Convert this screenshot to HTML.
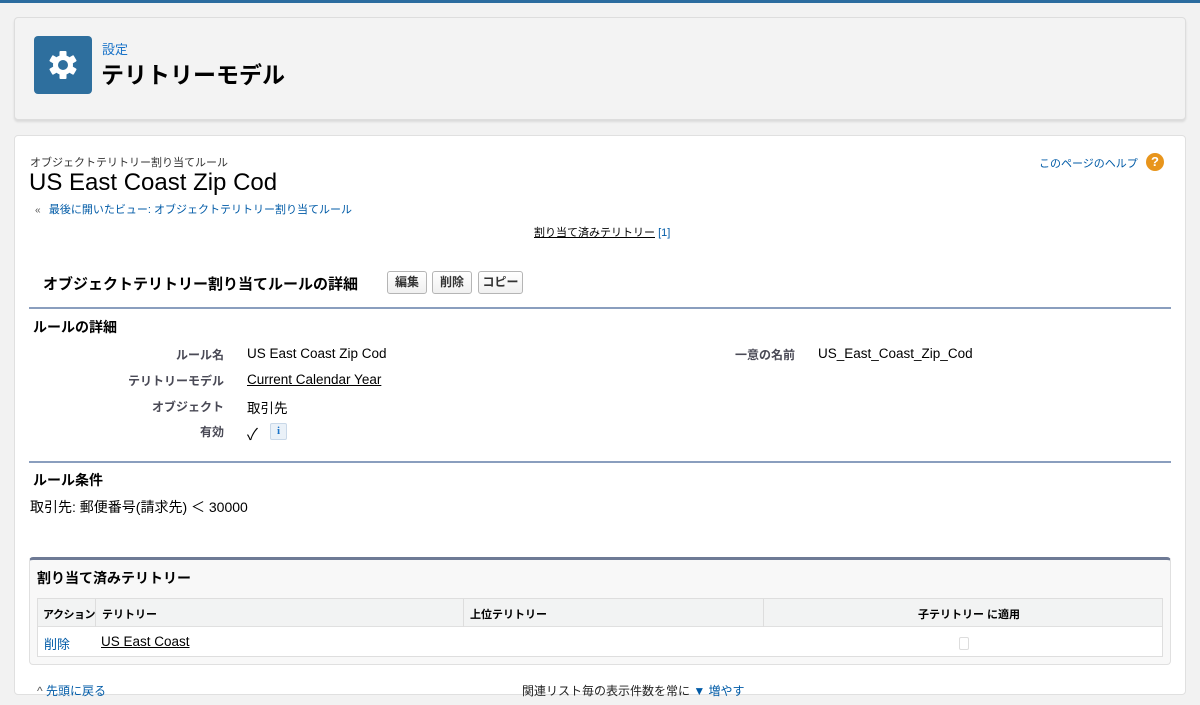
<!DOCTYPE html>
<html><head><meta charset="utf-8"><style>
*{margin:0;padding:0;box-sizing:border-box}
body{width:1200px;height:705px;background:#f2f2f2;font-family:"Liberation Sans","Noto Sans CJK JP",sans-serif;color:#000;position:relative;overflow:hidden}
.a{position:absolute}
a,.lk{color:#015ba7;text-decoration:none}
.u{text-decoration:underline;color:#000}
.btn{position:absolute;top:271px;height:23px;border:1px solid #b5b5b5;border-radius:3px;background:linear-gradient(#fff,#f0f0f0);font-size:12px;font-weight:bold;text-align:center;line-height:21px;color:#333}
.lbl{position:absolute;width:130px;text-align:right;font-size:12px;font-weight:bold;color:#4a4a56;left:94px}
.val{position:absolute;left:247px;font-size:13.5px}
</style></head><body>
<div class="a" style="left:0;top:0;width:1200px;height:3px;background:#2b6c9f"></div>
<div class="a" style="left:14px;top:17px;width:1172px;height:103px;background:#f3f3f3;border:1px solid #ddd;border-radius:4px;box-shadow:0 2px 2px rgba(0,0,0,.1)"></div>
<div class="a" style="left:34px;top:36px;width:58px;height:58px;background:#2e6f9e;border-radius:4px"></div>
<svg class="a" style="left:46px;top:48px" width="34" height="34" viewBox="0 0 34 34"><g fill="#fff" transform="translate(17 17)"><circle r="10"/><g id="t"><rect x="-3.5" y="-14" width="7" height="6" rx="1"/></g><use href="#t" transform="rotate(60)"/><use href="#t" transform="rotate(120)"/><use href="#t" transform="rotate(180)"/><use href="#t" transform="rotate(240)"/><use href="#t" transform="rotate(300)"/></g><circle cx="17" cy="17" r="5" fill="#2e6f9e"/></svg>
<div class="a lk" style="left:102px;top:39px;font-size:13px;color:#1a73c8">設定</div>
<div class="a" style="left:101px;top:56px;font-size:23px;font-weight:bold">テリトリーモデル</div>

<div class="a" style="left:14px;top:135px;width:1172px;height:560px;background:#fff;border:1px solid #e0e0e0;border-radius:4px"></div>
<div class="a" style="left:30px;top:154px;font-size:11px;color:#333">オブジェクトテリトリー割り当てルール</div>
<div class="a" style="left:29px;top:169px;font-size:24px">US East Coast Zip Cod</div>
<div class="a" style="left:35px;top:201px;font-size:10px;color:#555">«&nbsp;&nbsp;&nbsp;<span class="lk" style="font-size:11px">最後に開いたビュー: オブジェクトテリトリー割り当てルール</span></div>
<div class="a lk" style="left:1039px;top:155px;font-size:11px">このページのヘルプ</div>
<div class="a" style="left:1146px;top:153px;width:18px;height:18px;border-radius:50%;background:#e8951c;color:#fff;font-size:13px;font-weight:bold;text-align:center;line-height:18px">?</div>
<div class="a" style="left:534px;top:224px;font-size:11px"><span class="u">割り当て済みテリトリー</span> <span class="lk">[1]</span></div>

<div class="a" style="left:43px;top:273px;font-size:15px;font-weight:bold">オブジェクトテリトリー割り当てルールの詳細</div>
<div class="btn" style="left:387px;width:40px">編集</div>
<div class="btn" style="left:432px;width:40px">削除</div>
<div class="btn" style="left:478px;width:45px">コピー</div>
<div class="a" style="left:29px;top:307px;width:1142px;height:2px;background:#8a9ebe"></div>
<div class="a" style="left:33px;top:317px;font-size:14px;font-weight:bold">ルールの詳細</div>
<div class="lbl" style="top:346px">ルール名</div><div class="val" style="top:346px">US East Coast Zip Cod</div>
<div class="lbl" style="left:665px;top:346px">一意の名前</div><div class="val" style="left:818px;top:346px">US_East_Coast_Zip_Cod</div>
<div class="lbl" style="top:372px">テリトリーモデル</div><div class="val u" style="top:372px">Current Calendar Year</div>
<div class="lbl" style="top:398px">オブジェクト</div><div class="val" style="top:397px">取引先</div>
<div class="lbl" style="top:423px">有効</div><div class="val" style="top:421px;font-size:16px">✓</div>
<div class="a" style="left:270px;top:423px;width:17px;height:17px;border:1px solid #c9d8e8;background:#eaf1f8;border-radius:2px;color:#1a73c8;font:bold 11px 'Liberation Serif',serif;text-align:center;line-height:15px">i</div>
<div class="a" style="left:29px;top:461px;width:1142px;height:2px;background:#8a9ebe"></div>
<div class="a" style="left:33px;top:470px;font-size:14px;font-weight:bold">ルール条件</div>
<div class="a" style="left:30px;top:497px;font-size:14px">取引先: 郵便番号(請求先) ＜ 30000</div>

<div class="a" style="left:29px;top:557px;width:1142px;height:108px;background:#f8f8f8;border:1px solid #e0e0e0;border-top:3px solid #6e7a95;border-radius:4px"></div>
<div class="a" style="left:37px;top:568px;font-size:14px;font-weight:bold">割り当て済みテリトリー</div>
<div class="a" style="left:37px;top:598px;width:1126px;height:59px;border:1px solid #dedede;background:#fff"></div>
<div class="a" style="left:38px;top:599px;width:1124px;height:28px;background:#f2f3f3;border-bottom:1px solid #e0e0e0"></div>
<div class="a" style="left:95px;top:599px;width:1px;height:28px;background:#ddd"></div>
<div class="a" style="left:463px;top:599px;width:1px;height:28px;background:#ddd"></div>
<div class="a" style="left:763px;top:599px;width:1px;height:28px;background:#ddd"></div>
<div class="a" style="left:43px;top:606px;font-size:11px;font-weight:bold;letter-spacing:-0.5px">アクション</div>
<div class="a" style="left:102px;top:606px;font-size:11px;font-weight:bold">テリトリー</div>
<div class="a" style="left:470px;top:606px;font-size:11px;font-weight:bold">上位テリトリー</div>
<div class="a" style="left:918px;top:606px;font-size:11px;font-weight:bold">子テリトリー に適用</div>
<div class="a lk" style="left:44px;top:634px;font-size:13px">削除</div>
<div class="a u" style="left:101px;top:634px;font-size:13.5px">US East Coast</div>
<div class="a" style="left:959px;top:637px;width:10px;height:13px;border:1px solid #ddd;border-radius:2px"></div>

<div class="a" style="left:37px;top:682px;font-size:12px"><span style="color:#555">^</span> <span class="lk">先頭に戻る</span></div>
<div class="a" style="left:522px;top:682px;font-size:12px;color:#222">関連リスト毎の表示件数を常に <span class="lk">▼ 増やす</span></div>
</body></html>
